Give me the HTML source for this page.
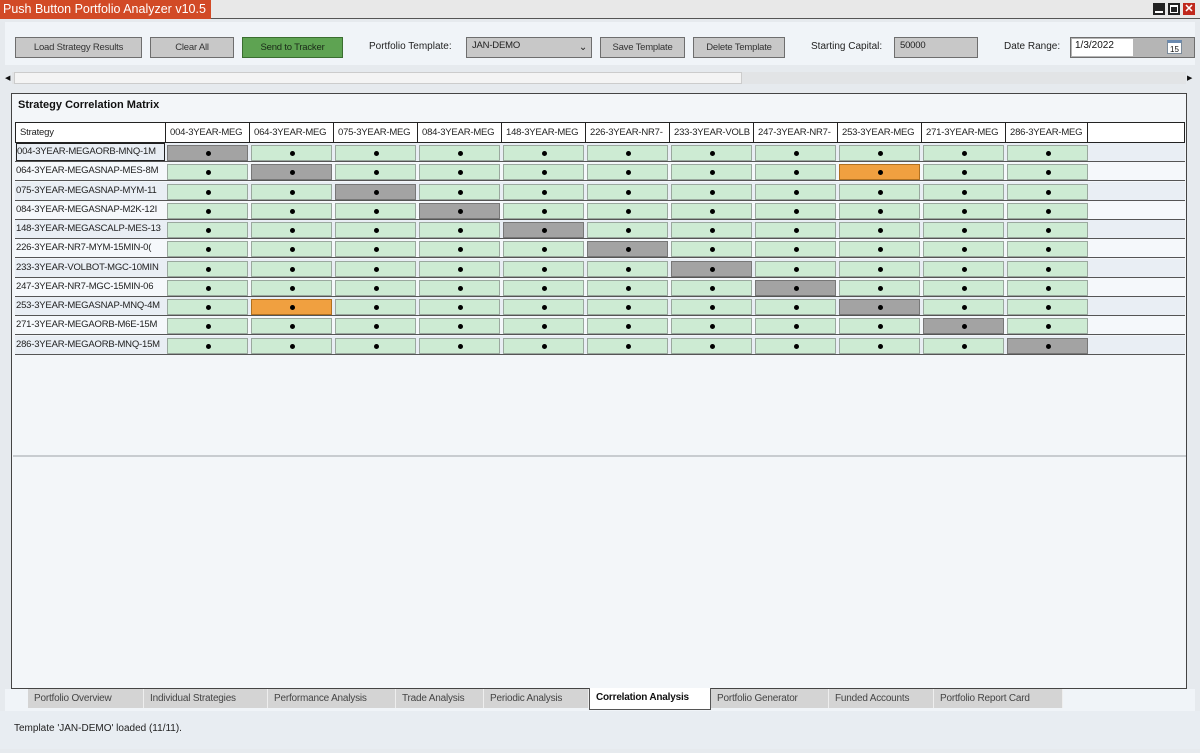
<!DOCTYPE html>
<html><head><meta charset="utf-8"><style>
*{box-sizing:border-box;margin:0;padding:0}
body{width:1200px;height:753px;overflow:hidden;background:#e6eaee;font-family:"Liberation Sans",sans-serif;font-size:10px;color:#111;position:relative}
.a{position:absolute}
.btn{position:absolute;top:37px;height:21px;background:#c8c8c8;border:1px solid #6e6e6e;font-size:9.5px;color:#333;display:flex;align-items:center;justify-content:center;letter-spacing:-0.2px}
.lbl{position:absolute;top:41px;font-size:10px;color:#222}
.hc{position:absolute;top:122px;height:21px;border:1px solid #222;background:#fff;font-size:9.5px;line-height:19px;padding-left:4px;overflow:hidden;white-space:nowrap;color:#222;letter-spacing:-0.2px}
.row{position:absolute;left:15px;width:1170px;height:19px;border-bottom:1px solid #555}
.row:nth-child(odd){background:#e9eef4}
.row:nth-child(even){background:#f5f8fb}
.rn{position:absolute;left:1px;top:1px;width:150px;font-size:9.5px;color:#222;white-space:nowrap;overflow:hidden;line-height:16px;letter-spacing:-0.2px}
.c{position:absolute;top:2px;width:81px;height:16px;background:#cdebd3;border:1px solid #9aa89e}
.c::after{content:"";position:absolute;left:38px;top:5px;width:5px;height:5px;border-radius:50%;background:#000}
.g{background:#a3a3a3;border-color:#777}
.o{background:#f0a040;border-color:#b07020}
.tab{position:absolute;top:689px;height:19px;background:#d4d4d4;font-size:10px;color:#444;padding-left:6px;line-height:19px;border-right:1px solid #eee;letter-spacing:-0.2px}
</style></head><body>
<div class="a" style="left:0;top:0;width:1200px;height:19px;background:#e8e8e8;border-bottom:1px solid #555"></div>
<div class="a" style="left:0;top:0;width:211px;height:19px;background:#d24a26;color:#fff;font-size:12.5px;line-height:19px;padding-left:3px">Push Button Portfolio Analyzer v10.5</div>
<div class="a" style="left:1153px;top:3px;width:12px;height:12px;background:#222"><div class="a" style="left:2px;top:8px;width:8px;height:2px;background:#fff"></div></div>
<div class="a" style="left:1168px;top:3px;width:12px;height:12px;background:#222"><div class="a" style="left:2px;top:2px;width:8px;height:8px;border:1px solid #fff;border-top-width:2px"></div></div>
<div class="a" style="left:1183px;top:3px;width:12px;height:12px;background:#c0281c;color:#fff;font-size:11px;font-weight:bold;line-height:12px;text-align:center">✕</div>
<div class="a" style="left:5px;top:22px;width:1190px;height:43px;background:#f0f4f8"></div>
<div class="btn" style="left:15px;width:127px">Load Strategy Results</div>
<div class="btn" style="left:150px;width:84px">Clear All</div>
<div class="btn" style="left:242px;width:101px;background:#5ea352;border-color:#3a6e30;color:#1a2a18">Send to Tracker</div>
<div class="lbl" style="left:369px">Portfolio Template:</div>
<div class="btn" style="left:466px;width:126px;justify-content:flex-start;align-items:flex-start;padding:2px 0 0 5px;color:#222">JAN-DEMO<span class="a" style="right:4px;top:4px;font-size:10px">&#8964;</span></div>
<div class="btn" style="left:600px;width:85px">Save Template</div>
<div class="btn" style="left:693px;width:92px">Delete Template</div>
<div class="lbl" style="left:811px">Starting Capital:</div>
<div class="btn" style="left:894px;width:84px;justify-content:flex-start;align-items:flex-start;padding:2px 0 0 5px;color:#222">50000</div>
<div class="lbl" style="left:1004px">Date Range:</div>
<div class="btn" style="left:1070px;width:125px;background:#b5b5b5"></div>
<div class="a" style="left:1072px;top:39px;width:61px;height:17px;background:#fff;font-size:10px;padding:1px 0 0 3px">1/3/2022</div>
<div class="a" style="left:1167px;top:40px;width:15px;height:14px;border:1px solid #7a8a9a;background:#fff;font-size:8px;text-align:center;line-height:13px;border-top:3px solid #6a8ab0">15</div>
<div class="a" style="left:12px;top:72px;width:1174px;height:12px;background:#e2e4e6"></div>
<div class="a" style="left:14px;top:72px;width:728px;height:12px;background:#f4f4f4;border:1px solid #ccc"></div>
<div class="a" style="left:5px;top:74px;font-size:7px">◀</div>
<div class="a" style="left:1187px;top:74px;font-size:7px">▶</div>
<div class="a" style="left:11px;top:93px;width:1176px;height:596px;background:#f3f6f9;border:1px solid #444"></div>
<div class="a" style="left:13px;top:94px;width:1173px;height:363px;border-bottom:2px solid #c8ccd0"></div>
<div class="a" style="left:18px;top:99px;font-size:11px;font-weight:bold">Strategy Correlation Matrix</div>
<div class="hc" style="left:15px;width:151px">Strategy</div>
<div class="hc" style="left:165px;width:85px">004-3YEAR-MEG</div>
<div class="hc" style="left:249px;width:85px">064-3YEAR-MEG</div>
<div class="hc" style="left:333px;width:85px">075-3YEAR-MEG</div>
<div class="hc" style="left:417px;width:85px">084-3YEAR-MEG</div>
<div class="hc" style="left:501px;width:85px">148-3YEAR-MEG</div>
<div class="hc" style="left:585px;width:85px">226-3YEAR-NR7-</div>
<div class="hc" style="left:669px;width:85px">233-3YEAR-VOLB</div>
<div class="hc" style="left:753px;width:85px">247-3YEAR-NR7-</div>
<div class="hc" style="left:837px;width:85px">253-3YEAR-MEG</div>
<div class="hc" style="left:921px;width:85px">271-3YEAR-MEG</div>
<div class="hc" style="left:1005px;width:83px">286-3YEAR-MEG</div>
<div class="hc" style="left:1087px;width:98px"></div>
<div>
<div class="row" style="top:143px"><div class="rn" style="border:1px solid #222;width:149px;height:18px;top:0">004-3YEAR-MEGAORB-MNQ-1M</div><div class="c g" style="left:152px"></div><div class="c" style="left:236px"></div><div class="c" style="left:320px"></div><div class="c" style="left:404px"></div><div class="c" style="left:488px"></div><div class="c" style="left:572px"></div><div class="c" style="left:656px"></div><div class="c" style="left:740px"></div><div class="c" style="left:824px"></div><div class="c" style="left:908px"></div><div class="c" style="left:992px"></div></div>
<div class="row" style="top:162px"><div class="rn">064-3YEAR-MEGASNAP-MES-8M</div><div class="c" style="left:152px"></div><div class="c g" style="left:236px"></div><div class="c" style="left:320px"></div><div class="c" style="left:404px"></div><div class="c" style="left:488px"></div><div class="c" style="left:572px"></div><div class="c" style="left:656px"></div><div class="c" style="left:740px"></div><div class="c o" style="left:824px"></div><div class="c" style="left:908px"></div><div class="c" style="left:992px"></div></div>
<div class="row" style="top:182px"><div class="rn">075-3YEAR-MEGASNAP-MYM-11</div><div class="c" style="left:152px"></div><div class="c" style="left:236px"></div><div class="c g" style="left:320px"></div><div class="c" style="left:404px"></div><div class="c" style="left:488px"></div><div class="c" style="left:572px"></div><div class="c" style="left:656px"></div><div class="c" style="left:740px"></div><div class="c" style="left:824px"></div><div class="c" style="left:908px"></div><div class="c" style="left:992px"></div></div>
<div class="row" style="top:201px"><div class="rn">084-3YEAR-MEGASNAP-M2K-12I</div><div class="c" style="left:152px"></div><div class="c" style="left:236px"></div><div class="c" style="left:320px"></div><div class="c g" style="left:404px"></div><div class="c" style="left:488px"></div><div class="c" style="left:572px"></div><div class="c" style="left:656px"></div><div class="c" style="left:740px"></div><div class="c" style="left:824px"></div><div class="c" style="left:908px"></div><div class="c" style="left:992px"></div></div>
<div class="row" style="top:220px"><div class="rn">148-3YEAR-MEGASCALP-MES-13</div><div class="c" style="left:152px"></div><div class="c" style="left:236px"></div><div class="c" style="left:320px"></div><div class="c" style="left:404px"></div><div class="c g" style="left:488px"></div><div class="c" style="left:572px"></div><div class="c" style="left:656px"></div><div class="c" style="left:740px"></div><div class="c" style="left:824px"></div><div class="c" style="left:908px"></div><div class="c" style="left:992px"></div></div>
<div class="row" style="top:239px"><div class="rn">226-3YEAR-NR7-MYM-15MIN-0(</div><div class="c" style="left:152px"></div><div class="c" style="left:236px"></div><div class="c" style="left:320px"></div><div class="c" style="left:404px"></div><div class="c" style="left:488px"></div><div class="c g" style="left:572px"></div><div class="c" style="left:656px"></div><div class="c" style="left:740px"></div><div class="c" style="left:824px"></div><div class="c" style="left:908px"></div><div class="c" style="left:992px"></div></div>
<div class="row" style="top:259px"><div class="rn">233-3YEAR-VOLBOT-MGC-10MIN</div><div class="c" style="left:152px"></div><div class="c" style="left:236px"></div><div class="c" style="left:320px"></div><div class="c" style="left:404px"></div><div class="c" style="left:488px"></div><div class="c" style="left:572px"></div><div class="c g" style="left:656px"></div><div class="c" style="left:740px"></div><div class="c" style="left:824px"></div><div class="c" style="left:908px"></div><div class="c" style="left:992px"></div></div>
<div class="row" style="top:278px"><div class="rn">247-3YEAR-NR7-MGC-15MIN-06</div><div class="c" style="left:152px"></div><div class="c" style="left:236px"></div><div class="c" style="left:320px"></div><div class="c" style="left:404px"></div><div class="c" style="left:488px"></div><div class="c" style="left:572px"></div><div class="c" style="left:656px"></div><div class="c g" style="left:740px"></div><div class="c" style="left:824px"></div><div class="c" style="left:908px"></div><div class="c" style="left:992px"></div></div>
<div class="row" style="top:297px"><div class="rn">253-3YEAR-MEGASNAP-MNQ-4M</div><div class="c" style="left:152px"></div><div class="c o" style="left:236px"></div><div class="c" style="left:320px"></div><div class="c" style="left:404px"></div><div class="c" style="left:488px"></div><div class="c" style="left:572px"></div><div class="c" style="left:656px"></div><div class="c" style="left:740px"></div><div class="c g" style="left:824px"></div><div class="c" style="left:908px"></div><div class="c" style="left:992px"></div></div>
<div class="row" style="top:316px"><div class="rn">271-3YEAR-MEGAORB-M6E-15M</div><div class="c" style="left:152px"></div><div class="c" style="left:236px"></div><div class="c" style="left:320px"></div><div class="c" style="left:404px"></div><div class="c" style="left:488px"></div><div class="c" style="left:572px"></div><div class="c" style="left:656px"></div><div class="c" style="left:740px"></div><div class="c" style="left:824px"></div><div class="c g" style="left:908px"></div><div class="c" style="left:992px"></div></div>
<div class="row" style="top:336px"><div class="rn">286-3YEAR-MEGAORB-MNQ-15M</div><div class="c" style="left:152px"></div><div class="c" style="left:236px"></div><div class="c" style="left:320px"></div><div class="c" style="left:404px"></div><div class="c" style="left:488px"></div><div class="c" style="left:572px"></div><div class="c" style="left:656px"></div><div class="c" style="left:740px"></div><div class="c" style="left:824px"></div><div class="c" style="left:908px"></div><div class="c g" style="left:992px"></div></div>
</div>
<div class="a" style="left:5px;top:689px;width:1190px;height:22px;background:#f0f4f8"></div>
<div class="tab" style="left:28px;width:116px">Portfolio Overview</div>
<div class="tab" style="left:144px;width:124px">Individual Strategies</div>
<div class="tab" style="left:268px;width:128px">Performance Analysis</div>
<div class="tab" style="left:396px;width:88px">Trade Analysis</div>
<div class="tab" style="left:484px;width:105px">Periodic Analysis</div>
<div class="tab" style="left:589px;top:688px;height:22px;width:122px;background:#fff;border:1px solid #555;border-top:none;font-weight:bold;color:#111;line-height:20px">Correlation Analysis</div>
<div class="tab" style="left:711px;width:118px">Portfolio Generator</div>
<div class="tab" style="left:829px;width:105px">Funded Accounts</div>
<div class="tab" style="left:934px;width:129px">Portfolio Report Card</div>
<div class="a" style="left:0;top:711px;width:1200px;height:38px;background:#e8edf2"></div>
<div class="a" style="left:14px;top:723px;font-size:10px;color:#222">Template 'JAN-DEMO' loaded (11/11).</div>
</body></html>
